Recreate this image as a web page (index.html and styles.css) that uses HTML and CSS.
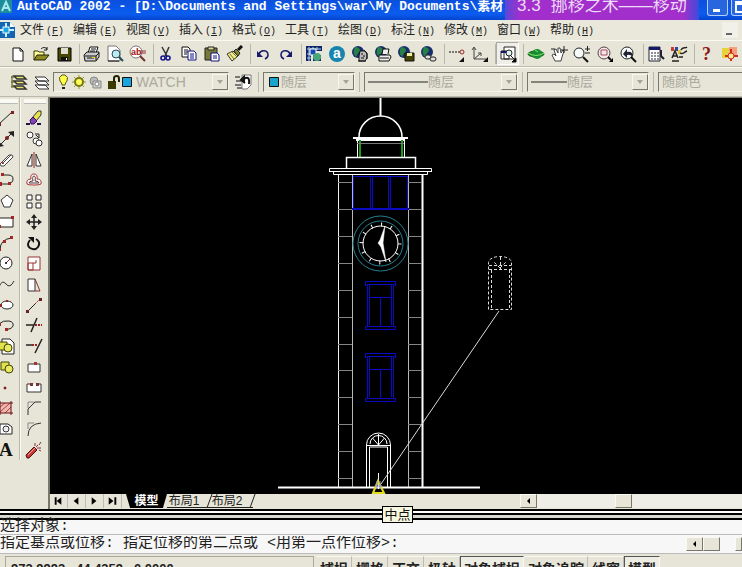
FILE: index.html
```html
<!DOCTYPE html>
<html lang="zh-CN">
<head>
<meta charset="utf-8">
<title>AutoCAD 2002</title>
<link rel="stylesheet" href="styles.css">
</head>
<body>
<header class="titlebar">
  <svg class="app-icon" width="13" height="14" viewBox="0 0 13 14"><rect width="12" height="13" fill="#1d8c9c"/><path d="M2 11 6 2l4 9M4 8h5" stroke="#a8e8ea" stroke-width="2" fill="none"/></svg>
  <h1 class="title">AutoCAD 2002 - [D:\Documents and Settings\war\My Documents\素材</h1>
  <div class="lesson"><span>3.3</span><span>挪移之术——移动</span></div>
  <div class="window-buttons">
    <button aria-label="最小化"><svg width="20" height="16"><path d="M5 9h7v3H5z" fill="#fff"/></svg></button>
    <button aria-label="还原"><svg width="20" height="16"><path d="M4 2h12v10H4zM4 4h12" fill="none" stroke="#fff" stroke-width="2"/></svg></button>
  </div>
</header>

<nav class="menubar">
  <svg class="doc-icon" width="15" height="16" viewBox="0 0 15 16"><path d="M0 0h10l5 5v11H0z" fill="#1464b4"/><path d="M6 1v14M0 8h14" stroke="#c8f0ff" stroke-width="2"/><rect x="3" y="5" width="6" height="6" fill="#1ba5dc" stroke="#e4faff"/><path d="M10 0v5h5" fill="#fff"/></svg>
  <button>文件<span>(<u>F</u>)</span></button>
  <button>编辑<span>(<u>E</u>)</span></button>
  <button>视图<span>(<u>V</u>)</span></button>
  <button>插入<span>(<u>I</u>)</span></button>
  <button>格式<span>(<u>O</u>)</span></button>
  <button>工具<span>(<u>T</u>)</span></button>
  <button>绘图<span>(<u>D</u>)</span></button>
  <button>标注<span>(<u>N</u>)</span></button>
  <button>修改<span>(<u>M</u>)</span></button>
  <button>窗口<span>(<u>W</u>)</span></button>
  <button>帮助<span>(<u>H</u>)</span></button>
  <button class="doc-min" aria-label="最小化文档"><svg width="14" height="14"><path d="M4 9h6v2H4z" fill="#666"/></svg></button>
</nav>

<div class="toolbar standard" role="toolbar" aria-label="标准">
  <button aria-label="新建"><svg viewBox="0 0 18 18"><path d="M4 3h7l3 3v10H4z" fill="#fff" stroke="#111"/><path d="M11 3v3h3" fill="none" stroke="#111"/></svg></button>
  <button aria-label="打开"><svg viewBox="0 0 18 18"><path d="M2 15V6h4l1 1h5v3" fill="#ffff9c" stroke="#333300"/><path d="m2 15 3-5h12l-4 5z" fill="#8c8c20" stroke="#222200"/><path d="M9 4c2-2 4-2 6 0m0-2v3h-3" fill="none" stroke="#111"/></svg></button>
  <button aria-label="保存"><svg viewBox="0 0 18 18"><path d="M3 3h13v13H3z" fill="#484800" stroke="#000"/><path d="M6 3h7v6H6z" fill="#deded0"/><path d="M6 12h7v4H6z" fill="#111"/><path d="M11 13h1v2h-1z" fill="#fff"/></svg></button>
  <i class="sep"></i>
  <button aria-label="打印"><svg viewBox="0 0 18 18"><path d="m5 8 2-6h8l-2 6" fill="#fff" stroke="#111"/><path d="M8 4h5M7 6h5" stroke="#111"/><path d="m1 10 3-3h12v5l-3 4H2z" fill="#ccc" stroke="#111"/><path d="M2 11h11v4M13 11l3-3M4 13h7" fill="none" stroke="#111"/><path d="M9 12h3v1H9z" fill="#eee000"/></svg></button>
  <button aria-label="打印预览"><svg viewBox="0 0 18 18"><path d="M2 1h8l4 4v11H2z" fill="#fff" stroke="#777"/><path d="M2 16h11" stroke="#111"/><circle cx="10" cy="9" r="4" fill="#b7eef2" stroke="#345"/><path d="m13 12 4 4" stroke="#234a52" stroke-width="2"/></svg></button>
  <button aria-label="查找和替换"><svg viewBox="0 0 18 18"><circle cx="7" cy="7" r="6" fill="#fff" stroke="#777"/><text x="2" y="10" font-size="9" class="glyph" fill="#a01010">ab</text><path d="M12 6h5M12 8h5" stroke="#933"/><path d="m11 11 5 5" stroke="#713030" stroke-width="2"/></svg></button>
  <i class="sep"></i>
  <button aria-label="剪切"><svg viewBox="0 0 18 18"><path d="m5 2 5 9M12 2l-4 9" stroke="#333" stroke-width="1.5"/><circle cx="6" cy="13" r="2" fill="none" stroke="#14148c" stroke-width="1.6"/><circle cx="11" cy="13" r="2" fill="none" stroke="#14148c" stroke-width="1.6"/></svg></button>
  <button aria-label="复制"><svg viewBox="0 0 18 18"><path d="M2 2h6l2 2v8H2z" fill="#fff" stroke="#111"/><path d="M4 5h4M4 7h4M4 9h3" stroke="#111"/><path d="M8 6h6l2 2v7H8z" fill="#fff" stroke="#101080"/><path d="M10 9h4M10 11h4M10 13h4" stroke="#101080"/></svg></button>
  <button aria-label="粘贴"><svg viewBox="0 0 18 18"><path d="M2 3h12v12H2z" fill="#77773a" stroke="#222"/><path d="M5 2h6v3H5z" fill="#d8d89a" stroke="#222"/><path d="M8 8h6l2 2v6H8z" fill="#fff" stroke="#101080"/><path d="M10 11h4M10 13h4" stroke="#101080"/></svg></button>
  <button aria-label="特性匹配"><svg viewBox="0 0 18 18"><path d="m1 9 6-3 5 5-6 5z" fill="#f3ef7c" stroke="#333"/><path d="m4 9 4 5M6 7l5 5" stroke="#666"/><path d="m8 6 2-2 4 4-2 3z" fill="#8a8a30" stroke="#222"/><path d="m12 5 4-4" stroke="#111" stroke-width="3"/></svg></button>
  <i class="sep"></i>
  <button aria-label="放弃"><svg viewBox="0 0 18 18"><path d="M5 9c2-5 9-4 9 1 0 2-1 3-3 4" fill="none" stroke="#18186c" stroke-width="1.5"/><path d="M3 6v6h6z" fill="#18186c"/></svg></button>
  <button aria-label="重做"><svg viewBox="0 0 18 18"><path d="M13 9C11 4 4 5 4 10c0 2 1 3 3 4" fill="none" stroke="#18186c" stroke-width="1.5"/><path d="M15 6v6H9z" fill="#18186c"/></svg></button>
  <i class="sep"></i>
  <button aria-label="今日"><svg viewBox="0 0 18 18"><path d="M1 1h16v5H1zM1 6h5v10H1z" fill="#10246c"/><path d="M2 4h14M2 9h4M2 13h4M4 2v14M8 2v3M12 2v3" stroke="#b5d5e8"/><path d="M5 4h6v6H5z" fill="#184bb0" stroke="#fff"/><path d="M8 10h8v6H8z" fill="#10246c"/><circle cx="12" cy="12" r="4" fill="#49a679"/></svg></button>
  <button aria-label="Autodesk 中心"><svg viewBox="0 0 18 18"><circle cx="9" cy="9" r="8" fill="#1684ae"/><text x="5" y="13" font-size="14" class="glyph" fill="#fff">a</text></svg></button>
  <button aria-label="网上会议"><svg viewBox="0 0 18 18"><circle cx="7" cy="7" r="6" fill="#182d6d"/><path d="M4 2q5 0 5 4-3 3-4 6-4-4-1-10" fill="#278047"/><path d="M9 6h5l2 3v4l-2 3H8v-5z" fill="#bbb" stroke="#111"/><path d="M7 16h8M13 5l3 3v6M10 9h2M12 11h2M10 13h3" stroke="#111" fill="none"/></svg></button>
  <button aria-label="发布到网页"><svg viewBox="0 0 18 18"><circle cx="7" cy="7" r="6" fill="#182d6d"/><path d="M4 2q5 0 5 4-3 3-4 6-4-4-1-10" fill="#278047"/><path d="m8 9 1-5h6l-1 5M5 10h11l1 2-2 4H5z" fill="#eee" stroke="#111"/><path d="M6 13h9" stroke="#111"/></svg></button>
  <button aria-label="电子传递"><svg viewBox="0 0 18 18"><circle cx="7" cy="7" r="6" fill="#182d6d"/><path d="M4 2q5 0 5 4-3 3-4 6-4-4-1-10" fill="#278047"/><path d="M8 8h9v8H8z" fill="#444400" stroke="#111"/><path d="M10 8h5v3h-5z" fill="#eeeeae"/></svg></button>
  <button aria-label="插入超级链接"><svg viewBox="0 0 18 18"><circle cx="7" cy="7" r="6" fill="#182d6d"/><path d="M4 2q5 0 5 4-3 3-4 6-4-4-1-10" fill="#278047"/><rect x="5" y="10" width="6" height="4" rx="2" fill="#ddd" stroke="#222"/><rect x="10" y="12" width="6" height="4" rx="2" fill="#ddd" stroke="#222"/></svg></button>
  <i class="sep"></i>
  <button aria-label="临时追踪点"><svg viewBox="0 0 18 18"><path d="M1 7h12" stroke="#111" stroke-dasharray="2 1"/><circle cx="14" cy="7" r="2" fill="none" stroke="#9c2323"/><path d="M16 12v5h-5z" fill="#111"/></svg></button>
  <button aria-label="UCS"><svg viewBox="0 0 18 18"><path d="M3 3v11h12M1 5l2-3 2 3M3 14l7-6M7 8h3v3" fill="none" stroke="#444"/><path d="M17 12v5h-5z" fill="#111"/></svg></button>
  <i class="sep"></i>
  <button class="pressed" aria-label="命名视图"><svg viewBox="0 0 18 18"><path d="M5 2h11v12H5zM2 6h8v8H2z" fill="#fff" stroke="#222"/><path d="M2 6h8v2H2z" fill="#15156c"/><circle cx="10" cy="8" r="3" fill="#dff2f4" stroke="#222"/><path d="m12 11 4 4M17 13v4h-4z" stroke="#111"/></svg></button>
  <i class="sep"></i>
  <button aria-label="三维动态观察"><svg viewBox="0 0 18 18"><ellipse cx="9" cy="9" rx="8" ry="3" fill="#1c8c2b" stroke="#175b22"/><circle cx="10" cy="9" r="5" fill="#188c30"/><path d="M1 8q8 5 16 0M8 5l3 2" stroke="#7ee46e" fill="none"/></svg></button>
  <button aria-label="实时平移"><svg viewBox="0 0 18 18"><path d="m5 16-3-6 2-1 2 2-2-6 2-1 2 4 0-5 2 0 1 5 2-3 1 1-2 6-1 4z" fill="#fff" stroke="#444"/><path d="M14 1v7M11 5h7M1 4h4" stroke="#222"/></svg></button>
  <button aria-label="实时缩放"><svg viewBox="0 0 18 18"><circle cx="6" cy="8" r="5" fill="#f5fafa" stroke="#222"/><path d="m10 12 5 5" stroke="#111" stroke-width="2"/><path d="M12 4h5M14.500 1v5M12 8h5" stroke="#222"/></svg></button>
  <button aria-label="窗口缩放"><svg viewBox="0 0 18 18"><circle cx="8" cy="8" r="6" fill="#f5e8e8" stroke="#544"/><path d="M5 5h6v5H5z" fill="none" stroke="#a64b67"/><path d="m12 12 3 3" stroke="#111" stroke-width="2"/><path d="M17 13v4h-4z"/></svg></button>
  <button aria-label="缩放上一个"><svg viewBox="0 0 18 18"><circle cx="8" cy="8" r="6" fill="#f5fafa" stroke="#222"/><path d="m12 12 5 5" stroke="#111" stroke-width="2"/><path d="m4 9 4-5v3q6-1 6 5-3-3-6-2v3z" fill="#223"/></svg></button>
  <i class="sep"></i>
  <button aria-label="特性"><svg viewBox="0 0 18 18"><path d="M2 2h11v14H2z" fill="#fff" stroke="#223"/><path d="M2 2h11v3H2z" fill="#17176c"/><path d="M4 8h2M7 8h2M10 8h2M4 11h2M7 11h2M10 11h2M4 14h2M7 14h2M10 14h2" stroke="#223"/><path d="M14 5v6l3 3" stroke="#223" stroke-width="2" fill="none"/></svg></button>
  <button aria-label="设计中心"><svg viewBox="0 0 18 18"><path d="M1 2h3v4H1z" fill="#cc3c2d"/><path d="M5 2h3v4H5z" fill="#2d48a5"/><path d="M8 5h3v4H8z" fill="#e2c530"/><path d="m2 13 3-7 3 7M3 11h4M2 16h7M9 12h4M11 5c2-4 4-1 6-3M10 8c3 2 4-1 7-2" stroke="#222" stroke-width="1.500" fill="none"/></svg></button>
  <i class="sep"></i>
  <button aria-label="帮助"><svg viewBox="0 0 18 18"><text x="4" y="15" font-size="18" class="serif-glyph" fill="#8c1515">?</text></svg></button>
  <button aria-label="活动助手"><svg viewBox="0 0 18 18"><path d="M1 3h9v10H1z" fill="#e5d438"/><path d="M8 2h8v8H8z" fill="#f2a17c"/><path d="M10 4v12M4 11h13" stroke="#d32828" stroke-width="2"/><circle cx="10" cy="11" r="3" fill="#f9eb90" stroke="#d32828"/></svg></button>
</div>

<div class="toolbar properties" role="toolbar" aria-label="对象特性">
  <button aria-label="图层置为当前"><svg viewBox="0 0 18 18"><path d="M4 3h9l3 3H7zM4 8h9l3 3H7zM4 13h9l3 3H7z" fill="#e4e46a" stroke="#333" stroke-width="1.500"/><path d="M2 3v11M1 4h3M1 9h3M1 14h3" stroke="#555500"/></svg></button>
  <button aria-label="图层"><svg viewBox="0 0 18 18"><path d="M2 12h10l4 4H6zM2 8h10l4 4H6zM2 4h10l4 4H6z" fill="#fff" stroke="#333"/></svg></button>
  <div class="combo layer">
    <svg width="76" height="16" viewBox="0 0 76 16"><path d="M5 11q0-2-2-4-2-4 2-6h3q4 2 2 6-2 2-2 4z" fill="#ffff4a" stroke="#555518"/><path d="M5 14h3" stroke="#222" stroke-width="2"/><circle cx="22" cy="8" r="4" fill="#ffff57" stroke="#777719" stroke-width="2"/><path d="M22 1v2M22 13v2M15 8h2M27 8h2M17 3l2 2M25 11l2 2M27 3l-2 2M19 11l-2 2" stroke="#999920"/><circle cx="37" cy="7" r="4" fill="#bbb" stroke="#888"/><path d="M36 7h8v7h-8z" fill="#ccc" stroke="#888"/><circle cx="40" cy="10" r="2" fill="#fff" stroke="#888"/><path d="M51 7h8v8h-8z" fill="#3b3b00"/><path d="M57 8V4q0-2 3-2 2 0 2 3v3" fill="none" stroke="#222200" stroke-width="2"/><path d="M65.500 3.500h9v9h-9z" fill="#18a4dc" stroke="#111"/></svg>
    <select aria-label="图层"><option>WATCH</option></select><i class="arrow"></i>
  </div>
  <button class="prev" aria-label="上一个图层"><svg viewBox="0 0 18 18"><path d="M1 4h5M2 8h5M1 12h6M3 15h10" stroke="#777" stroke-width="2"/><path d="M8 2h9v10l-4 4H8z" fill="#fff" stroke="#777"/><path d="M10 9V4l-3 3 4 3M10 6q6-4 5 5" stroke="#111" stroke-width="2" fill="none"/></svg></button>
  <i class="sep"></i>
  <div class="combo color"><svg width="14" height="16"><path d="M2.500 3.500h9v9h-9z" fill="#18a4cc" stroke="#111"/></svg><select aria-label="颜色"><option>随层</option></select><i class="arrow"></i></div>
  <i class="sep"></i>
  <div class="combo linetype"><i class="stroke"></i><select aria-label="线型"><option>随层</option></select><i class="arrow"></i></div>
  <i class="sep"></i>
  <div class="combo weight"><i class="stroke"></i><select aria-label="线宽"><option>随层</option></select><i class="arrow"></i></div>
  <i class="sep"></i>
  <div class="combo plot"><select aria-label="打印样式"><option>随颜色</option></select><i class="arrow"></i></div>
</div>

<main class="workspace">
  <div class="palette draw" role="toolbar" aria-label="绘图">
    <button aria-label="直线"><svg viewBox="0 0 18 18"><path d="M2 15 15 3" stroke="#222"/><path d="M1 14h3v3H1zM14 2h3v3h-3z" fill="#7d2020"/></svg></button>
    <button aria-label="构造线"><svg viewBox="0 0 18 18"><path d="M2 16 16 2" stroke="#222"/><path d="M17 1v6l-6-5zM1 17v-6l6 5z" fill="#222"/><circle cx="10" cy="8" r="2" fill="#722"/></svg></button>
    <button aria-label="多线"><svg viewBox="0 0 18 18"><path d="m3 13 9-9q4-1 4 2l-9 9q-4 1-4-2zM5 13l9-9" fill="#fff" stroke="#444"/><circle cx="6" cy="12" r="1" fill="#922"/></svg></button>
    <button aria-label="多段线"><svg viewBox="0 0 18 18"><path d="M6 4h5q5 0 5 4t-5 5H2" fill="none" stroke="#222"/><path d="M4 2h3v3H4zM1 11h4v4H1zM11 11h3v3h-3z" fill="#a32525"/></svg></button>
    <button aria-label="正多边形"><svg viewBox="0 0 18 18"><path d="m10 3 6 5-3 7H7L4 8z" fill="#fff" stroke="#333"/></svg></button>
    <button aria-label="矩形"><svg viewBox="0 0 18 18"><path d="M2 5h14v9H2z" fill="#fff" stroke="#222"/><path d="M14 3h3v3h-3zM1 12h3v3H1z" fill="#a32525"/></svg></button>
    <button aria-label="圆弧"><svg viewBox="0 0 18 18"><path d="M3 16q0-11 12-12" fill="none" stroke="#222"/><path d="M1 14h3v3H1zM6 6h3v3H6zM13 2h3v3h-3z" fill="#a32525"/></svg></button>
    <button aria-label="圆"><svg viewBox="0 0 18 18"><circle cx="9" cy="9" r="6" fill="#fff" stroke="#222"/><path d="m9 9 4-4" stroke="#922"/><circle cx="9" cy="9" r="1"/></svg></button>
    <button aria-label="样条曲线"><svg viewBox="0 0 18 18"><path d="M2 12q3-8 7-3t8-3" fill="none" stroke="#333"/></svg></button>
    <button aria-label="椭圆"><svg viewBox="0 0 18 18"><ellipse cx="10" cy="9" rx="6" ry="4" fill="#fff" stroke="#222"/><path d="M2 8h3v3H2zM9 4h2v2H9z" fill="#922"/></svg></button>
    <button aria-label="椭圆弧"><svg viewBox="0 0 18 18"><path d="M2 8q4-4 10-3 5 1 4 5-2 4-8 3" fill="none" stroke="#222"/><path d="M1 7h3v3H1zM8 12h3v3H8z" fill="#a32525"/></svg></button>
    <button aria-label="插入块"><svg viewBox="0 0 18 18"><path d="M5 2h8l4 4v11H5z" fill="#fff" stroke="#222"/><path d="M2 5h8v8H2z" fill="#dfe04a" stroke="#444400"/><circle cx="11" cy="11" r="4" fill="#e8e966" stroke="#444400"/></svg></button>
    <button aria-label="创建块"><svg viewBox="0 0 18 18"><path d="M4 4h8v8H4z" fill="#dfe04a" stroke="#444400"/><circle cx="12" cy="11" r="4" fill="#e8e966" stroke="#444400"/></svg></button>
    <button aria-label="点"><svg viewBox="0 0 18 18"><circle cx="8" cy="9" r="1" fill="#711" stroke="#711"/></svg></button>
    <button aria-label="图案填充"><svg viewBox="0 0 18 18"><path d="M3 4h11v10H3z" fill="#f0b9b2"/><path d="m3 13 10-9M3 8l5-4M8 14l6-6" stroke="#a73e3e"/><path d="M3 2v14M14 2v14M1 4h15M1 14h15" stroke="#611"/></svg></button>
    <button aria-label="面域"><svg viewBox="0 0 18 18"><path d="M3 4h8l4 3v7H3z" fill="#fff" stroke="#222"/><circle cx="9" cy="9" r="3" fill="#eee" stroke="#333"/></svg></button>
    <button aria-label="多行文字"><svg viewBox="0 0 18 18"><text x="2" y="15" font-size="19" class="serif-glyph" fill="#111">A</text></svg></button>
  </div>
  <div class="palette modify" role="toolbar" aria-label="修改">
    <button aria-label="删除"><svg viewBox="0 0 18 18"><path d="m7 9 6-7h3v4l-5 6z" fill="#e5e44e" stroke="#333"/><path d="m5 11 3-3 4 4-3 3H6z" fill="#8244b4" stroke="#315"/><path d="M1 15h4M12 15h4" stroke="#214" stroke-width="2"/></svg></button>
    <button aria-label="复制对象"><svg viewBox="0 0 18 18"><circle cx="5" cy="5" r="3" fill="#fff" stroke="#333"/><circle cx="11" cy="11" r="3" fill="#fff" stroke="#333"/><circle cx="14" cy="13" r="3" fill="#fff" stroke="#333"/><path d="M10 4h4v4m-3-3 3 3" stroke="#222" fill="none"/></svg></button>
    <button aria-label="镜像"><svg viewBox="0 0 18 18"><path d="M7 3v12H2zM11 3v12h5z" fill="#fff" stroke="#333"/><path d="M9 1v16" stroke="#922"/></svg></button>
    <button aria-label="偏移"><svg viewBox="0 0 18 18"><path d="M2 13q-1-5 4-5-1-5 3-5t3 5q5 0 4 5-1 1-7 1t-7-1z" fill="#fff" stroke="#a33"/><path d="M4 12q0-2 4-2-1-5 1-5t1 5q4 0 4 2z" fill="none" stroke="#533"/></svg></button>
    <button aria-label="阵列"><svg viewBox="0 0 18 18"><path d="M2 3h5v5H2zM11 3h5v5h-5zM2 11h5v5H2zM11 11h5v5h-5z" fill="#fff" stroke="#222"/></svg></button>
    <button aria-label="移动"><svg viewBox="0 0 18 18"><path d="M9 3v12M3 9h12" stroke="#222" stroke-width="1.500"/><path d="m9 1 3 4H6zM9 17l3-4H6zM1 9l4-3v6zM17 9l-4-3v6z" fill="#222"/></svg></button>
    <button aria-label="旋转"><svg viewBox="0 0 18 18"><path d="M5 6q-4 5 0 8 5 3 8-1 3-5-2-8" fill="none" stroke="#111" stroke-width="2"/><path d="M3 3h6v6z" fill="#111"/></svg></button>
    <button aria-label="比例"><svg viewBox="0 0 18 18"><path d="M3 3h12v13H3z" fill="#fff" stroke="#933"/><path d="M3 9h5v7H3zM8 9h3V6" fill="none" stroke="#933"/></svg></button>
    <button aria-label="拉伸"><svg viewBox="0 0 18 18"><path d="M3 4h7v12H3z" fill="#fff" stroke="#333"/><path d="m10 4 5 12h-5" fill="none" stroke="#833"/></svg></button>
    <button aria-label="拉长"><svg viewBox="0 0 18 18"><path d="m3 15 7-7" stroke="#222"/><path d="m10 8 5-5" stroke="#922" stroke-dasharray="2 1"/><path d="M1 14h3v3H1zM14 2h3v3h-3z" fill="#622"/></svg></button>
    <button aria-label="修剪"><svg viewBox="0 0 18 18"><path d="M1 9h8M12 2 6 16" stroke="#222" stroke-width="1.500"/><path d="M10 9h7" stroke="#922" stroke-width="2" stroke-dasharray="2 1"/></svg></button>
    <button aria-label="延伸"><svg viewBox="0 0 18 18"><path d="M1 8h6M17 2l-7 14" stroke="#222" stroke-width="1.500"/><path d="M7 8h6" stroke="#922" stroke-width="2" stroke-dasharray="2 1"/></svg></button>
    <button aria-label="打断于点"><svg viewBox="0 0 18 18"><path d="M3 6h12v8H3z" fill="#fff" stroke="#333"/><path d="M9 4h3v3H9z" fill="#a33"/></svg></button>
    <button aria-label="打断"><svg viewBox="0 0 18 18"><path d="M6 5H2v8h14V5h-4" fill="#fff" stroke="#333"/><path d="M5 4h3v3H5zM11 4h3v3h-3z" fill="#733"/></svg></button>
    <button aria-label="倒角"><svg viewBox="0 0 18 18"><path d="M3 16V10l7-7h6" fill="none" stroke="#333"/><path d="M3 9V3h6" stroke="#888" fill="none"/></svg></button>
    <button aria-label="圆角"><svg viewBox="0 0 18 18"><path d="M3 16q0-12 13-13" fill="none" stroke="#333"/><path d="M3 9V3h6" stroke="#888" fill="none"/></svg></button>
    <button aria-label="分解"><svg viewBox="0 0 18 18"><path d="m1 14 8-8 3 3-8 8H2z" fill="#c93737" stroke="#511"/><path d="m3 14 7-7" stroke="#f0a3a0"/><path d="m11 6 2-2M12 7h4M10 5V2M14 4l2-3M14 9l2 1" stroke="#833"/></svg></button>
  </div>

  <section class="drawing">
    <svg class="canvas" role="img" aria-label="钟楼立面图">
      <g transform="translate(-50 -98)" fill="none" stroke="#fff">
        <path d="M380.500 97v19" stroke-width="2"/>
        <path d="M359 137a21.500 21 0 0 1 43 0" stroke-width="1.500"/>
        <path d="M353 137h55v2h-3v2h-49v-2h-3z" fill="#fff" stroke="none"/>
        <path d="M357.500 141v16M404.500 141v16" />
        <path d="M360 140v17M402 140v17" stroke="#18a018" stroke-width="2"/>
        <path d="M357 143.500h47" stroke="#777"/>
        <path d="M346.500 168v-10.500h69V168" stroke-width="1.500"/>
        <path d="M329.500 168.500h102v3h-4v3h-94v-3h-4zM329 171.500h103"/>
        <g stroke="#b8b8b8"><path d="M352.500 175v312M408.500 175v312"/><path d="M338.500 175v312" stroke="#eee"/><path d="M422.500 175v312" stroke="#fff" stroke-width="2"/></g>
        <path stroke="#858585" d="M338 182.500h14M338 209.500h14M338 236.500h14M338 263.500h14M338 290.500h14M338 317.500h14M338 344.500h14M338 370.500h14M338 397.500h14M338 424.500h14M338 451.500h14M338 478.500h14M408 182.500h14M408 209.500h14M408 236.500h14M408 263.500h14M408 290.500h14M408 317.500h14M408 344.500h14M408 370.500h14M408 397.500h14M408 424.500h14M408 451.500h14M408 478.500h14"/>
        <g stroke="#0a0ac4">
          <path d="M353 176.500h55M370.500 176v32M372.500 176v32M388.500 176v32M390.500 176v32M353.500 176v32M407.500 176v32"/><path d="M352 209h57" stroke-width="2"/>
          <path id="window" d="M365.500 281.500h30v4h-2v41h2v3h-30v-3h2v-41h-2zM367 284.500h27M369.500 285v40M391.500 285v40M369 297.500h22M380.500 298v29M367 326.500h27"/>
          <use href="#window" y="72"/>
        </g>
        <g stroke="#267f91"><circle cx="380.500" cy="243.500" r="27.500"/><circle cx="380.500" cy="243.500" r="22.500"/></g>
        <circle cx="380.500" cy="243.500" r="17.500"/>
        <circle cx="380.500" cy="243.500" r="19" stroke-width="4" stroke-dasharray="1 8.950"/>
        <path d="m378 243 2-3 5-14-2 17 3 19-5-15z" fill="#fff" stroke-width=".5"/>
        <path d="M366.500 487v-42a12 12 0 0 1 24 0v42M369.500 487v-40h18v40M366 445.500h24M370 444a8.500 8.500 0 0 1 17 0M378.500 434v11M378.500 445l-6-7M378.500 445l6-7"/>
        <path d="M278 487.500h202" stroke-width="2"/>
        <path d="m381 484 118-173" stroke="#d8d8d8"/>
        <path d="M378.500 473v16" />
        <path d="m378 481-5 12h11z" stroke="#e3dc19" stroke-width="2"/><path d="M375 486h7M377 481v8M380 481v8" stroke="#8c8cd8"/>
        <g stroke="#ddd" stroke-dasharray="3 2"><path d="M488.500 309.500v-47a11.500 6 0 0 1 23 0v47zM491.500 308v-39M509.500 308v-39M489 265.500h22M489 269.500h22M500.500 257v12M500 268l-6-6M500 268l6-6"/></g>
      </g>
    </svg>
    <div class="sheetbar">
      <div class="sheet-nav">
        <button aria-label="第一个"><svg viewBox="0 0 18 12"><path d="M5 2h2v8H5zM12 2v8L7 6z"/></svg></button>
        <button aria-label="上一个"><svg viewBox="0 0 18 12"><path d="M11 2v8L6 6z"/></svg></button>
        <button aria-label="下一个"><svg viewBox="0 0 18 12"><path d="M6 2v8l5-4z"/></svg></button>
        <button aria-label="最后一个"><svg viewBox="0 0 18 12"><path d="M5 2v8l5-4zM11 2h2v8h-2z"/></svg></button>
      </div>
      <button class="tab active">模型</button><button class="tab">布局1</button><button class="tab">布局2</button>
      <div class="hscroll"><button class="scroll-button" aria-label="向左滚动"><svg width="8" height="8"><path d="M5 1v6L2 4z"/></svg></button><i class="thumb"></i></div>
    </div>
  </section>
  <div class="snap-tip" role="tooltip">中点</div>
</main>

<div class="splitter"></div>
<section class="command">
  <div class="history">选择对象:</div>
  <div class="prompt"><input aria-label="命令行" value="指定基点或位移: 指定位移的第二点或 &lt;用第一点作位移&gt;:">
    <div class="command-scroll"><button class="scroll-button" aria-label="向左滚动命令行"><svg width="8" height="8"><path d="M5 1v6L2 4z"/></svg></button><i class="thumb"></i><button class="scroll-button right" aria-label="向右滚动命令行"></button></div>
  </div>
</section>
<footer class="status">
  <output class="coords">973.9993 , 44.4359 , 0.0000</output>
  <button>捕捉</button><button>栅格</button><button>正交</button><button>极轴</button><button class="on">对象捕捉</button><button>对象追踪</button><button>线宽</button><button class="on">模型</button>
</footer>
</body>
</html>
```
FILE: styles.css
```css
* { box-sizing: border-box; }
body {
  margin: 0;
  height: 100vh;
  display: flex;
  flex-direction: column;
  overflow: hidden;
  background: #e6e5d7;
  color: #222;
  font: 12px/16px "Liberation Sans", "Noto Sans CJK SC", sans-serif;
}
body > * { flex: none; }
button { padding: 0; border: 0; background: none; color: inherit; font: inherit; white-space: nowrap; }
svg { display: block; flex: none; }
.glyph { font-family: "Liberation Sans", sans-serif; font-weight: bold; }
.serif-glyph { font-family: "Liberation Serif", serif; font-weight: bold; }

.titlebar {
  position: relative;
  display: flex;
  height: 20px;
  overflow: hidden;
  background: linear-gradient(#0c50dc, #0a5cf0 70%, #0644cc);
  color: #fff;
}
.title {
  margin: 0;
  padding-left: 4px;
  font: bold 13px/14px "Liberation Mono", "Noto Sans CJK SC", monospace;
  white-space: nowrap;
}
.lesson {
  position: absolute;
  left: 505px;
  top: 0;
  display: flex;
  gap: 10px;
  height: 20px;
  padding: 0 12px;
  background: linear-gradient(90deg, #5a48d8, #a22fcb 8%, #a22fcb 92%, #3a4cdc);
  color: #ecdcf8;
  font-size: 17px;
  line-height: 11px;
  white-space: nowrap;
}
.window-buttons { position: absolute; right: -10px; top: 0; display: flex; gap: 3px; }
.window-buttons button { width: 21px; height: 16px; border: 1px solid #b5cdf8; border-top: 0; border-radius: 0 0 3px 3px; background: #2766dd; }

.menubar { display: flex; align-items: center; height: 20px; padding-right: 4px; background: #eae8db; }
.menubar button { width: 53px; padding-top: 1px; text-align: left; }
.doc-icon { margin-right: 5px; }
.menubar span { padding-left: 2px; font: 10px/16px "Liberation Mono", monospace; }
.menubar .doc-min { width: 16px; height: 16px; margin-left: auto; background: #f1f0e9; }

.toolbar { display: flex; align-items: center; border-top: 1px solid #faf9f2; border-bottom: 1px solid #bab9ac; overflow: hidden; }
.toolbar > button { flex: none; display: grid; place-items: center; width: 23px; height: 23px; }
.toolbar svg { height: 18px; }
.combo svg { height: 16px; }
.toolbar > button svg { width: 18px; }
.toolbar .sep { flex: none; width: 5px; height: 20px; border: solid #b8b7aa; border-width: 0 1px 0 0; }
.standard { height: 27px; padding-left: 6px; }
.standard .pressed { border: 1px solid; border-color: #aaa #fff #fff #aaa; background: #f0efe7; }
.properties { height: 30px; padding-left: 7px; }
.properties .prev { margin-left: 2px; }
.properties .sep { margin-right: 4px; }
.combo {
  flex: none;
  display: flex;
  align-items: center;
  height: 20px;
  padding-left: 3px;
  border: 1px solid;
  border-color: #77776c #f6f5ed #f6f5ed #77776c;
  color: #aaa99d;
}
.combo select { flex: 1; min-width: 0; padding: 0; border: 0; appearance: none; background: none; color: inherit; font: 13px/16px "Liberation Sans", "Noto Sans CJK SC", sans-serif; }
.combo .arrow { display: grid; place-items: center; width: 16px; height: 16px; border: 1px solid; border-color: #f8f7ee #77776c #77776c #f8f7ee; }
.combo .arrow::after { content: ""; border: 3px solid transparent; border-top: 4px solid #a5a499; border-bottom: 0; }
.combo .stroke { width: 60px; height: 2px; background: #85857b; }
.layer { width: 176px; }
.layer select { padding-left: 3px; font-size: 14px; }
.color { width: 92px; }
.linetype { width: 154px; }
.weight { width: 122px; }
.weight .stroke { width: 36px; }
.plot { width: 140px; }

.workspace { position: relative; flex: 1; display: flex; min-height: 0; }
.palette { flex: none; display: grid; grid-template-rows: repeat(17, 1fr); height: 363px; padding-top: 11px; }
.palette button { display: grid; place-items: center; min-height: 0; }
.palette svg { width: 18px; height: 18px; }
.palette::before { content: ""; position: absolute; top: 2px; width: 18px; height: 4px; border-bottom: 1px solid #bbb; background: #faf9f2; }
.draw { width: 19px; }
.draw svg { margin-left: -8px; }
.modify { width: 29px; border-left: 1px solid #bab9ac; box-shadow: inset 1px 0 #faf9f2; }
.modify::before { left: 24px; width: 22px; }
.drawing { flex: 1; display: flex; flex-direction: column; min-width: 0; border-left: 2px solid #77776c; border-top: 1px solid #77776c; }
.canvas { flex: 1; width: 100%; min-height: 0; background: #000; }
.sheetbar { position: relative; flex: none; display: flex; height: 15px; }
.sheet-nav { display: flex; width: 76px; }
.sheet-nav button { width: 18px; height: 14px; border-right: 1px solid #bbb; }
.sheet-nav svg { width: 17px; height: 12px; }
.tab { position: relative; width: 43px; height: 14px; padding-right: 9px; line-height: 14px; border-bottom: 1px solid #222; }
.tab::after { content: ""; position: absolute; right: 0; top: 0; height: 14px; border-right: 1px solid #222; transform: skewX(-20deg); }
.tab.active { width: 41px; padding: 0; border: 0; background: #000; color: #fff; font-weight: bold; clip-path: polygon(0 0, 100% 0, 90% 100%, 10% 100%); }
.hscroll { position: absolute; left: 470px; right: 0; top: 0; display: flex; height: 14px; background: #efeee6; }
.scroll-button, .thumb { display: grid; place-items: center; width: 17px; height: 14px; border: 1px solid; border-color: #faf9f2 #77776c #77776c #faf9f2; background: #e6e5d7; }
.hscroll .thumb { margin-left: 78px; }
.snap-tip { position: absolute; z-index: 1; left: 382px; bottom: -14px; width: 31px; height: 17px; border: 1px solid #000; background: #f6f6df; color: #111; font-size: 13px; line-height: 15px; text-align: center; }

.splitter { height: 11px; border-top: 2px solid #000; border-bottom: 2px solid #000; background: linear-gradient(#fff 2px, #000 2px 4px, #d9d9d1 4px); }
.command { background: #f7f7f7; font-family: "Liberation Mono", "Noto Sans CJK SC", monospace; font-size: 15px; }
.history { height: 15px; line-height: 14px; border-bottom: 1px solid #bbb; }
.prompt { display: flex; height: 18px; }
.prompt input { flex: 1; min-width: 0; padding: 0; border: 0; background: none; color: #222; font: inherit; }
.command-scroll { display: flex; flex: none; align-items: center; }
.command-scroll .right { margin-left: 15px; width: 7px; }
.status { display: flex; height: 14px; border-top: 1px solid #bbb; overflow: hidden; font-weight: bold; font-size: 14px; line-height: 24px; }
.status > * { flex: none; height: 26px; margin-top: 2px; }
.coords { width: 309px; margin-right: 2px; margin-left: 5px; padding-left: 5px; border: 1px solid #aaa99d; font-size: 13px; line-height: 24px; }
.status button { padding: 0 3px; border: 1px solid; border-color: #faf9f2 #bbb #bbb #e6e5d7; }
.status .on { border-color: #555 #faf9f2 #faf9f2 #555; background: #eeede4; }
```
